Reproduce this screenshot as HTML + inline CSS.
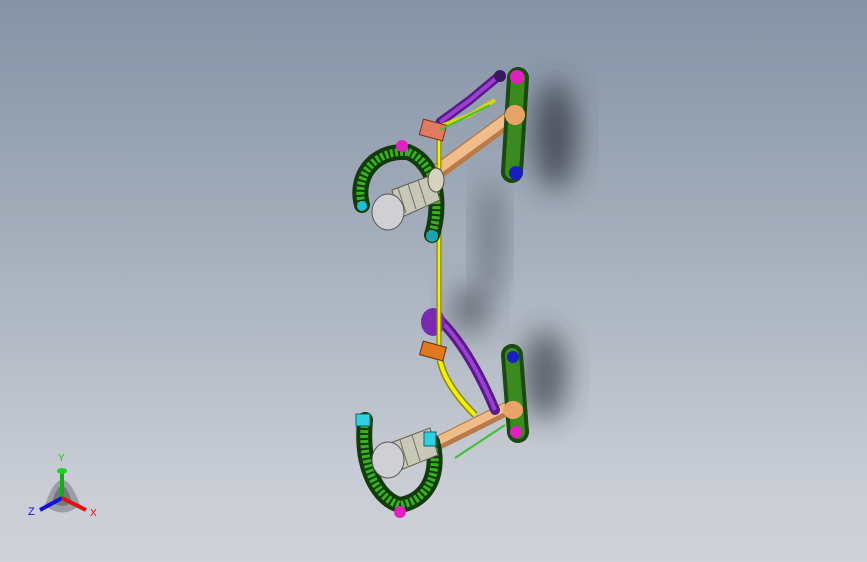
<!DOCTYPE html>
<html><head><style>
html,body{margin:0;padding:0;width:867px;height:562px;overflow:hidden}
body{background:linear-gradient(180deg,#8693a5 0%,#a6b0bd 45%,#c8ccd4 85%,#cfd2d8 100%);font-family:"Liberation Sans",sans-serif}
</style></head><body>
<svg width="867" height="562" viewBox="0 0 867 562" xmlns="http://www.w3.org/2000/svg" style="position:absolute;left:0;top:0">
<defs>
<filter id="b" x="-50%" y="-50%" width="200%" height="200%"><feGaussianBlur stdDeviation="14"/></filter>
<filter id="b2"><feGaussianBlur stdDeviation="3"/></filter>
<linearGradient id="tube" x1="0" y1="0" x2="0" y2="1"><stop offset="0" stop-color="#f7d4a8"/><stop offset="0.5" stop-color="#e8a468"/><stop offset="1" stop-color="#b87040"/></linearGradient>
</defs>
<!-- shadows -->
<ellipse cx="555" cy="135" rx="22" ry="55" fill="#2a2f38" opacity="0.7" filter="url(#b)"/>
<ellipse cx="490" cy="240" rx="12" ry="60" fill="#2a2f38" opacity="0.45" filter="url(#b)"/>
<ellipse cx="545" cy="375" rx="22" ry="45" fill="#2a2f38" opacity="0.65" filter="url(#b)"/>
<ellipse cx="470" cy="310" rx="20" ry="25" fill="#2a2f38" opacity="0.5" filter="url(#b)"/>
<!-- upper tube -->
<line x1="437" y1="172" x2="512" y2="117" stroke="#b87a48" stroke-width="16" stroke-linecap="round"/>
<line x1="437" y1="170" x2="512" y2="115" stroke="#f0bd8a" stroke-width="10" stroke-linecap="round"/>
<!-- lower tube -->
<line x1="440" y1="442" x2="508" y2="408" stroke="#b87a48" stroke-width="14" stroke-linecap="round"/>
<line x1="440" y1="440" x2="508" y2="406" stroke="#f0bd8a" stroke-width="8" stroke-linecap="round"/>
<!-- purple arms -->
<path d="M500 75 L470 100 L440 122" stroke="#5a1a8a" stroke-width="9" fill="none" stroke-linecap="round"/>
<path d="M500 75 L470 100 L440 122" stroke="#9a40d0" stroke-width="4" fill="none"/>
<circle cx="500" cy="76" r="6" fill="#3a1860"/>
<path d="M440 320 Q470 350 495 410" stroke="#5a1a8a" stroke-width="10" fill="none" stroke-linecap="round"/>
<path d="M440 320 Q470 350 495 410" stroke="#9a40d0" stroke-width="4" fill="none"/>
<ellipse cx="433" cy="322" rx="12" ry="14" fill="#7a2ab0"/>
<!-- yellow rod -->
<line x1="439" y1="140" x2="439" y2="350" stroke="#8a8a00" stroke-width="5"/>
<line x1="439" y1="140" x2="439" y2="350" stroke="#f4f000" stroke-width="2.5"/>
<path d="M440 360 Q445 385 475 415" stroke="#8a8a00" stroke-width="7" fill="none"/>
<path d="M440 360 Q445 385 475 415" stroke="#f4f000" stroke-width="4" fill="none"/>
<path d="M430 130 L470 115 L495 100" stroke="#d8d800" stroke-width="4" fill="none"/>
<!-- orange plates -->
<rect x="421" y="122" width="24" height="16" fill="#e07a60" stroke="#7a3020" transform="rotate(15 433 130)"/>
<rect x="421" y="344" width="24" height="14" fill="#e07820" stroke="#6a3010" transform="rotate(15 433 351)"/>
<!-- right green arms -->
<path d="M518 78 L512 172" stroke="#1a4a10" stroke-width="22" stroke-linecap="round"/>
<path d="M518 78 L512 172" stroke="#3a8a20" stroke-width="14" stroke-linecap="round"/>
<circle cx="516" cy="173" r="7" fill="#1a20c0"/>
<path d="M512 355 L518 432" stroke="#1a4a10" stroke-width="22" stroke-linecap="round"/>
<path d="M512 355 L518 432" stroke="#3a8a20" stroke-width="14" stroke-linecap="round"/>
<circle cx="513" cy="357" r="6" fill="#1a20c0"/>
<ellipse cx="515" cy="115" rx="10" ry="10" fill="#e8a468"/>
<ellipse cx="513" cy="410" rx="10" ry="9" fill="#e8a468"/>
<!-- upper C-arm -->
<path d="M408 152 C370 150 355 180 362 205 M408 152 C440 165 440 210 432 235" stroke="#123a0c" stroke-width="16" fill="none" stroke-linecap="round"/>
<path d="M408 152 C370 150 355 180 362 205 M408 152 C440 165 440 210 432 235" stroke="#38b020" stroke-width="8" fill="none" stroke-dasharray="3 2"/>
<!-- spring upper -->
<path d="M392 190 L432 175 L440 200 L400 218 Z" fill="#c8c8b8" stroke="#606050"/>
<g stroke="#707060" fill="none"><line x1="398" y1="188" x2="406" y2="213"/><line x1="408" y1="184" x2="416" y2="209"/><line x1="418" y1="180" x2="426" y2="205"/></g>
<ellipse cx="436" cy="180" rx="8" ry="12" fill="#d8d0c0" stroke="#505040"/>
<ellipse cx="388" cy="212" rx="16" ry="18" fill="#d0d0d4" stroke="#555"/>
<circle cx="362" cy="206" r="5" fill="#20c0d0"/>
<circle cx="432" cy="236" r="6" fill="#20a0b0"/>
<circle cx="402" cy="146" r="6" fill="#e020c0"/>
<!-- lower C-arm -->
<path d="M365 420 C360 470 380 500 400 505 C430 500 440 470 432 442" stroke="#123a0c" stroke-width="16" fill="none" stroke-linecap="round"/>
<path d="M365 420 C360 470 380 500 400 505 C430 500 440 470 432 442" stroke="#38b020" stroke-width="8" fill="none" stroke-dasharray="3 2"/>
<path d="M385 445 L430 428 L438 455 L393 473 Z" fill="#c8c8b8" stroke="#606050"/>
<g stroke="#707060" fill="none"><line x1="400" y1="440" x2="408" y2="466"/><line x1="412" y1="435" x2="420" y2="461"/></g>
<ellipse cx="388" cy="460" rx="16" ry="18" fill="#d0d0d4" stroke="#555"/>
<rect x="356" y="414" width="14" height="12" fill="#30d0e0" stroke="#106070"/>
<rect x="424" y="432" width="12" height="14" fill="#30d0e0" stroke="#106070"/>
<circle cx="400" cy="512" r="6" fill="#e020c0"/>
<circle cx="516" cy="432" r="6" fill="#e020c0"/>
<circle cx="517" cy="77" r="7" fill="#e020c0"/>
<line x1="455" y1="458" x2="505" y2="425" stroke="#40c030" stroke-width="2"/>
<line x1="440" y1="130" x2="490" y2="105" stroke="#40c030" stroke-width="2"/>
<!-- triad -->
<path d="M45 505 Q62 455 80 505 Q62 520 45 505 Z" fill="#444" opacity="0.35"/>
<path d="M52 502 Q62 470 72 502 Q62 510 52 502 Z" fill="#333" opacity="0.35"/>
<line x1="62" y1="498" x2="62" y2="472" stroke="#10b010" stroke-width="4"/>
<ellipse cx="62" cy="471" rx="5" ry="3" fill="#20d020"/>
<line x1="62" y1="498" x2="40" y2="510" stroke="#1010e0" stroke-width="4"/>
<line x1="62" y1="498" x2="86" y2="510" stroke="#e01010" stroke-width="4"/>
<text x="58" y="461" font-size="10" fill="#20c020">Y</text>
<text x="28" y="515" font-size="11" fill="#1010e0">Z</text>
<text x="90" y="516" font-size="10" fill="#e01010">X</text>
</svg>
</body></html>
